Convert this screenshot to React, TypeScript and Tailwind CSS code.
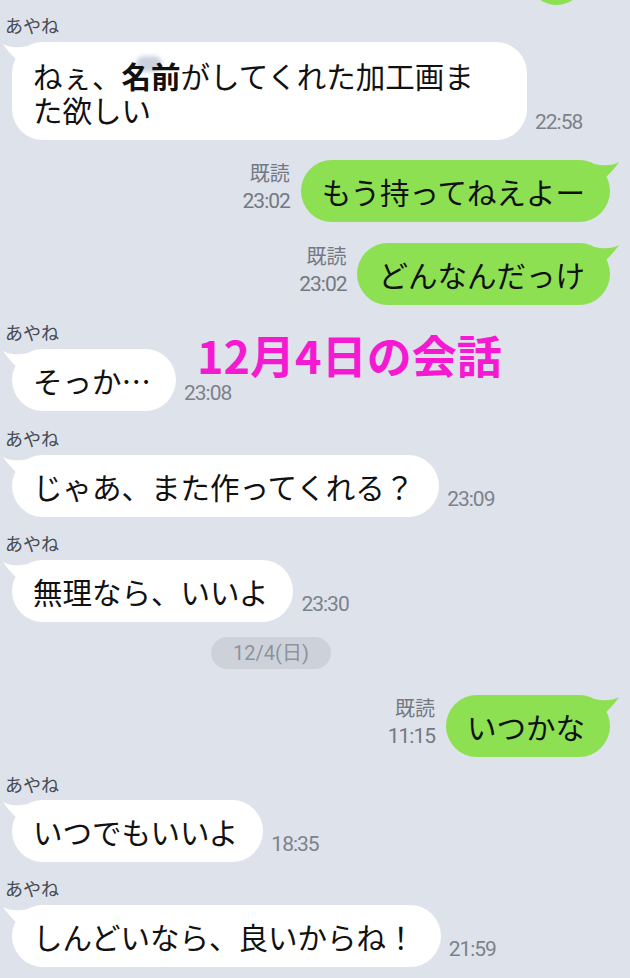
import React from "react";

const jp = { fontFamily: '"Noto Sans CJK JP", "Noto Sans", sans-serif' };
const num = { fontFamily: 'Roboto, "Noto Sans CJK JP", sans-serif' };

const LeftTail = () => (
  <svg
    className="absolute left-[-10px] top-0"
    width="26"
    height="28"
    viewBox="0 0 26 28"
  >
    <path d="M1 2 C8 6 16 6 26 4 L26 26 C16 20 8 12 1 2 Z" fill="#ffffff" />
  </svg>
);

const RightTail = () => (
  <svg
    className="absolute right-[-10px] top-0 -scale-x-100"
    width="26"
    height="28"
    viewBox="0 0 26 28"
  >
    <path d="M1 2 C8 6 16 6 26 4 L26 26 C16 20 8 12 1 2 Z" fill="#8ce052" />
  </svg>
);

const Name = ({ mt }: { mt: string }) => (
  <div className={`${mt} pl-[5px] text-[18px] leading-[20px] text-[#454a53]`}>
    あやね
  </div>
);

interface InProps {
  text: React.ReactNode;
  time: string;
  mt?: string;
  width?: string;
}

const Incoming = ({ text, time, mt = "mt-[7px]", width = "" }: InProps) => (
  <div className={`${mt} flex items-end gap-[8px] pl-[12px]`}>
    <div
      className={`relative rounded-[31px] bg-white pl-[21px] pr-[25px] py-[14px] text-[29.5px] leading-[34px] text-[#111] ${width}`}
    >
      <LeftTail />
      <div className="relative">{text}</div>
    </div>
    <div
      className="mb-[6px] text-[21px] leading-[24px] tracking-[-1px] text-[#7c828c]"
      style={num}
    >
      {time}
    </div>
  </div>
);

const Outgoing = ({ text, time, mt }: { text: string; time: string; mt: string }) => (
  <div className={`${mt} flex items-end justify-end gap-[11px] pr-[20px]`}>
    <div className="mb-[7px] flex flex-col items-end text-[#737983]">
      <div className="text-[20px] leading-[28px]">既読</div>
      <div className="text-[21px] leading-[28px] tracking-[-1px]" style={num}>
        {time}
      </div>
    </div>
    <div className="relative rounded-[31px] bg-[#8ce052] pl-[21px] pr-[25px] py-[14px] text-[29.5px] leading-[34px] text-[#111]">
      <RightTail />
      {text}
    </div>
  </div>
);

export default function App() {
  return (
    <div className="relative h-[978px] w-[630px] overflow-hidden bg-[#dee2ea]" style={jp}>
      <div className="flex flex-col">
        <div className="flex h-[5px] items-end justify-end overflow-hidden pr-[45px]">
          <div className="h-[60px] w-[57px] shrink-0 rounded-[30px] bg-[#8ce052]" />
        </div>

        <Name mt="mt-[10px]" />
        <Incoming
          width="w-[515px] pr-[34px] pt-[16px]"
          time="22:58"
          text={
            <>
              ねぇ、
              <span className="relative">
                <span className="absolute left-[14px] top-[2px] h-[16px] w-[26px] rounded-full bg-[#aab4cc] opacity-60 blur-[2px]" />
                <span className="relative font-bold">名前</span>
              </span>
              がしてくれた加工画また欲しい
            </>
          }
        />

        <Outgoing mt="mt-[19px]" text="もう持ってねえよー" time="23:02" />
        <Outgoing mt="mt-[20px]" text="どんなんだっけ" time="23:02" />

        <Name mt="mt-[17px]" />
        <Incoming text="そっか…" time="23:08" />

        <Name mt="mt-[17px]" />
        <Incoming text="じゃあ、また作ってくれる？" time="23:09" />

        <Name mt="mt-[16px]" />
        <Incoming text="無理なら、いいよ" time="23:30" />

        <div className="mt-[15px] pl-[211px]">
          <div
            className="flex h-[32px] w-[120px] items-center justify-center rounded-full bg-[#cdd2da] text-[20px] text-[#8d939c]"
            style={num}
          >
            12/4(日)
          </div>
        </div>

        <Outgoing mt="mt-[25px]" text="いつかな" time="11:15" />

        <Name mt="mt-[17px]" />
        <Incoming mt="mt-[6px]" text="いつでもいいよ" time="18:35" />

        <Name mt="mt-[16px]" />
        <Incoming text="しんどいなら、良いからね！" time="21:59" />
      </div>

      <div className="absolute left-[197px] top-[332px] text-[45px] font-bold leading-[46px] text-[#f51ad2]">
        12月4日の会話
      </div>
    </div>
  );
}
